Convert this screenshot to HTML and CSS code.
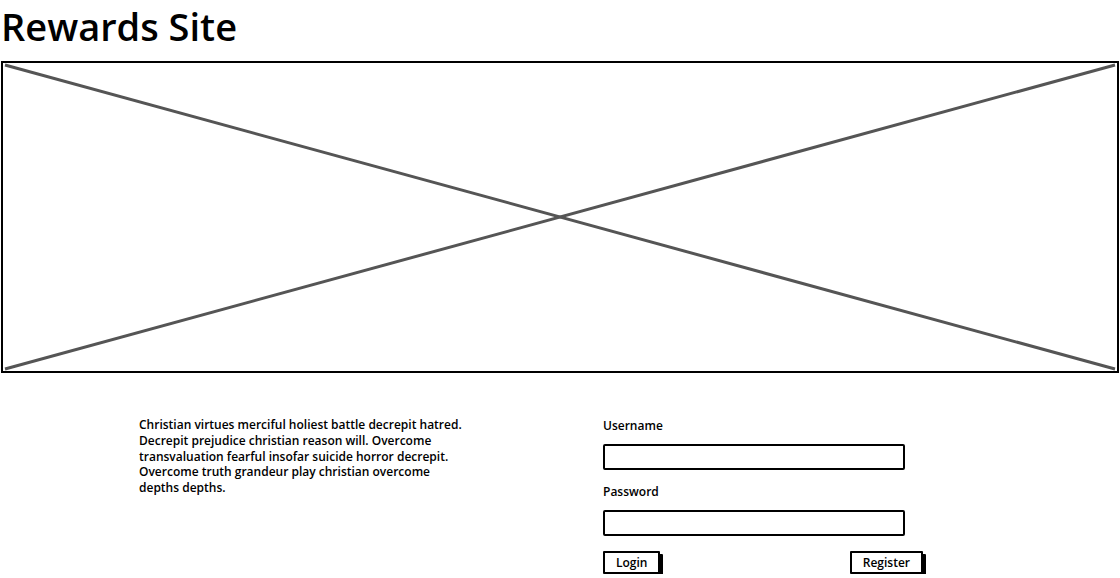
FILE: index.html
```html
<!DOCTYPE html>
<html lang="en">
<head>
  <meta charset="UTF-8" />
  <title>Rewards Site</title>
  <link rel="stylesheet" href="styles.css">
</head>
<body>
  <h1 class="title">Rewards Site</h1>

  <!-- Placeholder image box -->
  <div class="hero">
    <svg class="hero-x" viewBox="0 0 1114 308" preserveAspectRatio="none">
      <line x1="2" y1="2" x2="1112" y2="306" />
      <line x1="2" y1="306" x2="1112" y2="2" />
    </svg>
  </div>

  <div class="bottom">
    <p class="blurb">
      Christian virtues merciful holiest battle decrepit hatred.
      Decrepit prejudice christian reason will. Overcome
      transvaluation fearful insofar suicide horror decrepit.
      Overcome truth grandeur play christian overcome
      depths depths.
    </p>

    <form class="login">
      <label class="label">Username</label>
      <input class="field" type="text">
      <label class="label">Password</label>
      <input class="field" type="password">
      <div class="buttons">
        <button class="btn" type="button">Login</button>
        <button class="btn" type="button">Register</button>
      </div>
    </form>
  </div>
</body>
</html>
```

FILE: styles.css
```css
/* Basic page styling */
body {
  margin: 0;
  padding: 0;
  background: #fff;
  color: #000;
  font-family: "Open Sans", sans-serif;
  overflow: hidden;
}
.title {
  margin: 0;
  padding: 0 0 0 1px;
  height: 61px;
  box-sizing: border-box;
  font-size: 38px;
  font-weight: 600;
  line-height: 52px;
}
/* Image placeholder with the big X */
.hero {
  margin: 0 1px 0 1px;
  height: 312px;
  border: 2px solid #000;
  box-sizing: border-box;
}
.hero-x {
  display: block;
  width: 100%;
  height: 100%;
}
.hero-x line {
  stroke: #555;
  stroke-width: 3;
}
.bottom {
  display: grid;
  grid-template-columns: 464px 330px;
  padding: 44px 0 0 139px;
}
.blurb {
  margin: 0;
  width: 326px;
  font-size: 12px;
  font-weight: 600;
  line-height: 15.8px;
}
.login {
  display: flex;
  flex-direction: column;
  width: 302px;
}
.label {
  font-size: 12px;
  font-weight: 600;
  line-height: 16px;
  margin: 1px 0 10px 0;
}
.field {
  height: 26px;
  margin: 0 0 13px 0;
  border: 2px solid #000;
  border-radius: 2px;
  box-sizing: border-box;
}
.buttons {
  display: flex;
  justify-content: space-between;
  width: 320px;
  margin-top: 2px;
}
.btn {
  height: 23px;
  padding: 0 11px;
  background: #fff;
  border: 2px solid #000;
  border-radius: 1px;
  box-shadow: 3px 3px 0 #000;
  font-family: "Open Sans", sans-serif;
  font-size: 12px;
  font-weight: 600;
}
```
